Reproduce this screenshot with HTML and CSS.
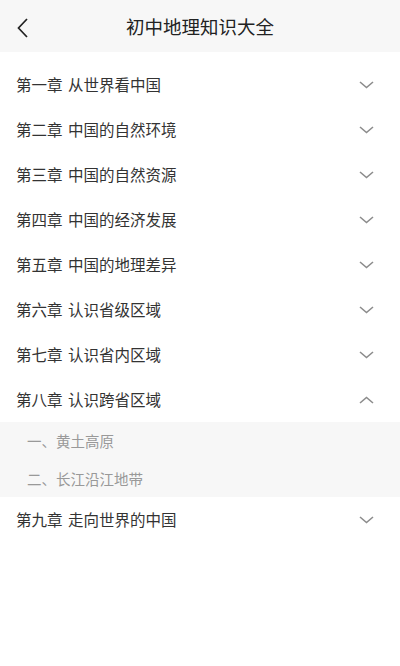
FILE: index.html
```html
<!DOCTYPE html>
<html lang="zh">
<head>
<meta charset="utf-8">
<link rel="stylesheet" href="styles.css">
</head>
<body>
<header class="nav">
  <span class="back"><svg width="14" height="22" viewBox="0 0 14 22"><path d="M11 2 L2.5 11 L11 20" fill="none" stroke="#222" stroke-width="1.7"/></svg></span>
  <h1 class="title">初中地理知识大全</h1>
</header>
<main class="list">
  <div class="row"><span class="label">第一章 从世界看中国</span><svg class="chev" width="15" height="8" viewBox="0 0 15 8"><path d="M1 1 L7.5 6.5 L14 1"/></svg></div>
  <div class="row"><span class="label">第二章 中国的自然环境</span><svg class="chev" width="15" height="8" viewBox="0 0 15 8"><path d="M1 1 L7.5 6.5 L14 1"/></svg></div>
  <div class="row"><span class="label">第三章 中国的自然资源</span><svg class="chev" width="15" height="8" viewBox="0 0 15 8"><path d="M1 1 L7.5 6.5 L14 1"/></svg></div>
  <div class="row"><span class="label">第四章 中国的经济发展</span><svg class="chev" width="15" height="8" viewBox="0 0 15 8"><path d="M1 1 L7.5 6.5 L14 1"/></svg></div>
  <div class="row"><span class="label">第五章 中国的地理差异</span><svg class="chev" width="15" height="8" viewBox="0 0 15 8"><path d="M1 1 L7.5 6.5 L14 1"/></svg></div>
  <div class="row"><span class="label">第六章 认识省级区域</span><svg class="chev" width="15" height="8" viewBox="0 0 15 8"><path d="M1 1 L7.5 6.5 L14 1"/></svg></div>
  <div class="row"><span class="label">第七章 认识省内区域</span><svg class="chev" width="15" height="8" viewBox="0 0 15 8"><path d="M1 1 L7.5 6.5 L14 1"/></svg></div>
  <div class="row"><span class="label">第八章 认识跨省区域</span><svg class="chev" width="15" height="8" viewBox="0 0 15 8"><path d="M1 7 L7.5 1.5 L14 7"/></svg></div>
  <div class="sub">
    <div class="sub-item">一、黄土高原</div>
    <div class="sub-item">二、长江沿江地带</div>
  </div>
  <div class="row"><span class="label">第九章 走向世界的中国</span><svg class="chev" width="15" height="8" viewBox="0 0 15 8"><path d="M1 1 L7.5 6.5 L14 1"/></svg></div>
</main>
</body>
</html>
```
FILE: styles.css
```css
* { box-sizing: border-box; }
body {
  margin: 0;
  background: #fff;
  font-family: "Noto Sans CJK SC", "Noto Sans", sans-serif;
  color: #333;
}
.nav {
  height: 52px;
  background: #f7f7f7;
  display: flex;
  align-items: center;
  justify-content: center;
  position: relative;
}
.back {
  position: absolute;
  left: 16px;
  top: 17px;
  display: flex;
}
.title {
  margin: 0;
  font-size: 18.5px;
  font-weight: normal;
  color: #222;
}
.list {
  padding-top: 10px;
}
.row {
  height: 45px;
  display: flex;
  align-items: center;
  justify-content: space-between;
  padding: 0 26px 0 16px;
}
.label {
  font-size: 15.5px;
  color: #333;
  line-height: 1;
  word-spacing: 2px;
}
.chev {
  fill: none;
  stroke: #8c8c8c;
  stroke-width: 1.6;
}
.sub {
  background: #f7f7f7;
}
.sub-item {
  height: 37.5px;
  display: flex;
  align-items: center;
  padding-left: 27px;
  font-size: 14.5px;
  color: #999;
}
```
